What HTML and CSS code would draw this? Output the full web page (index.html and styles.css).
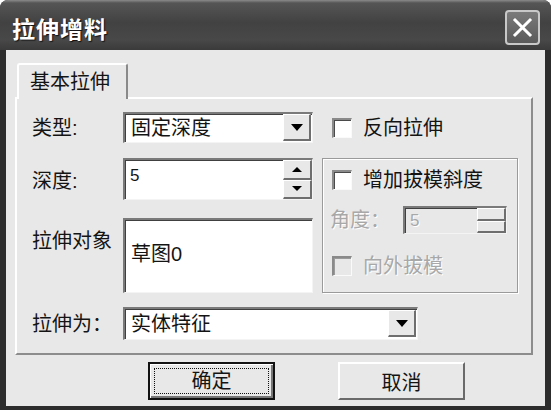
FILE: index.html
```html
<!DOCTYPE html>
<html lang="zh-CN">
<head>
  <meta charset="UTF-8">
  <title>拉伸增料</title>
  <link rel="stylesheet" href="styles.css">
</head>
<body>
  <div class="dialog">
    <div class="titlebar">
      <span class="title">拉伸增料</span>
      <span class="close">
        <svg width="21" height="21" viewBox="0 0 21 21"><path d="M3 3 L18 18 M18 3 L3 18" stroke="#fff" stroke-width="3" stroke-linecap="square"/></svg>
      </span>
    </div>

    <div class="client">
      <div class="tabs">
        <div class="tab">基本拉伸</div>
      </div>

      <div class="panel">
        <div class="form">
          <span class="lbl">类型:</span>
          <div class="combo">
            <span class="field-text">固定深度</span>
            <span class="drop"><i class="tri-down"></i></span>
          </div>
          <div class="check-row"><span class="check"></span>反向拉伸</div>

          <span class="lbl">深度:</span>
          <div class="spin">
            <span class="spin-text">5</span>
            <span class="spin-btns">
              <span class="spin-btn"><i class="tri-up small"></i></span>
              <span class="spin-btn"><i class="tri-down small"></i></span>
            </span>
          </div>

          <div class="group">
            <div class="check-row"><span class="check"></span>增加拔模斜度</div>
            <div class="angle-row disabled">
              <span>角度：</span>
              <div class="spin spin-off">
                <span class="spin-text">5</span>
                <span class="spin-btns">
                  <span class="spin-btn"></span>
                  <span class="spin-btn"></span>
                </span>
              </div>
            </div>
            <div class="check-row disabled"><span class="check check-off"></span>向外拔模</div>
          </div>

          <span class="lbl lbl-top">拉伸对象</span>
          <div class="listbox">草图0</div>

          <span class="lbl">拉伸为：</span>
          <div class="combo combo-wide">
            <span class="field-text">实体特征</span>
            <span class="drop"><i class="tri-down"></i></span>
          </div>
        </div>
      </div>

      <div class="buttons">
        <span class="btn btn-default"><span class="focus">确定</span></span>
        <span class="btn">取消</span>
      </div>
    </div>
  </div>
</body>
</html>
```

FILE: styles.css
```css
body {
  margin: 0;
  background: #fff;
  font-family: "Liberation Sans", "Noto Sans CJK SC", sans-serif;
  color: #141414;
}

.dialog {
  width: 551px;
  height: 410px;
  display: flex;
  flex-direction: column;
  background: #2c2c2c;
  border-radius: 8px 8px 0 0;
  overflow: hidden;
}

/* title bar */
.titlebar {
  height: 50px;
  box-sizing: border-box;
  padding: 5px 11px 0 12px;
  display: flex;
  align-items: center;
  justify-content: space-between;
  background: linear-gradient(#8a8a8a 0, #555 3px, #424242 45%, #484848 80%, #3a3a3a 100%);
}

.title {
  color: #fff;
  font-size: 23px;
  font-weight: bold;
  letter-spacing: 1px;
  text-shadow: 1px 1px 1px #111;
}

.close {
  width: 35px;
  height: 35px;
  box-sizing: border-box;
  border: 2px solid #c8c8c8;
  border-radius: 4px;
  background: linear-gradient(#7a7a7a, #5a5a5a);
  display: flex;
  align-items: center;
  justify-content: center;
}

/* client area */
.client {
  flex: 1;
  margin: 0 6px 4px 6px;
  padding: 13px 12px 0 9px;
  background: #e8e8e8;
}

.tabs {
  display: flex;
  padding-left: 2px;
}

.tab {
  position: relative;
  z-index: 1;
  width: 111px;
  height: 36px;
  box-sizing: border-box;
  margin-bottom: -2px;
  padding: 2px 0 0 11px;
  border-top: 2px solid #fff;
  border-left: 2px solid #fff;
  border-right: 2px solid #8a8a8a;
  border-radius: 3px 3px 0 0;
  background: #e8e8e8;
  font-size: 20px;
  line-height: 30px;
}

.panel {
  height: 258px;
  box-sizing: border-box;
  border-top: 2px solid #fff;
  border-left: 2px solid #fff;
  border-right: 2px solid #8c8c8c;
  border-bottom: 2px solid #8c8c8c;
  padding: 13px 0 0 15px;
}

.form {
  display: grid;
  grid-template-columns: 82px 190px 196px;
  grid-template-rows: 31px 45px 74px 33px;
  column-gap: 9px;
  row-gap: 15px;
  font-size: 20px;
}

.lbl {
  align-self: center;
  line-height: 24px;
}

.lbl-top {
  align-self: start;
  margin-top: 11px;
}

/* sunken fields */
.combo,
.spin,
.listbox {
  box-sizing: border-box;
  background: #fff;
  border-top: 2px solid #7a7a7a;
  border-left: 2px solid #7a7a7a;
  border-right: 1px solid #f4f4f4;
  border-bottom: 1px solid #f4f4f4;
  box-shadow: inset 1px 1px 0 #404040;
}

.combo {
  display: flex;
  align-items: center;
  justify-content: space-between;
  padding: 0 1px 1px 6px;
}

.combo-wide {
  grid-column: 2 / 4;
  width: 295px;
}

.field-text {
  font-size: 20px;
  line-height: 24px;
}

.drop {
  width: 28px;
  height: 27px;
  box-sizing: border-box;
  display: flex;
  align-items: center;
  justify-content: center;
  background: #e8e8e8;
  border-top: 1px solid #fff;
  border-left: 1px solid #fff;
  border-right: 2px solid #6e6e6e;
  border-bottom: 2px solid #6e6e6e;
}

.tri-down {
  width: 0;
  height: 0;
  border-left: 6px solid transparent;
  border-right: 6px solid transparent;
  border-top: 7px solid #000;
}

.tri-up {
  width: 0;
  height: 0;
  border-left: 6px solid transparent;
  border-right: 6px solid transparent;
  border-bottom: 7px solid #000;
}

.tri-down.small {
  border-left-width: 5px;
  border-right-width: 5px;
  border-top-width: 5px;
}

.tri-up.small {
  border-left-width: 5px;
  border-right-width: 5px;
  border-bottom-width: 5px;
}

.spin {
  height: 42px;
  display: flex;
  justify-content: space-between;
  padding-left: 5px;
}

.spin-text {
  font-size: 17px;
  line-height: 17px;
  padding-top: 7px;
}

.spin-btns {
  width: 29px;
  display: flex;
  flex-direction: column;
}

.spin-btn {
  flex: 1;
  display: flex;
  align-items: center;
  justify-content: center;
  background: #e8e8e8;
  border-top: 1px solid #fff;
  border-left: 1px solid #fff;
  border-right: 2px solid #6e6e6e;
  border-bottom: 2px solid #6e6e6e;
}

.listbox {
  height: 75px;
  padding: 22px 0 0 6px;
  font-size: 20px;
  line-height: 24px;
}

/* check boxes */
.check-row {
  display: flex;
  align-items: center;
  gap: 11px;
  padding-left: 10px;
  line-height: 24px;
}

.check {
  width: 20px;
  height: 20px;
  box-sizing: border-box;
  background: #fff;
  border-top: 2px solid #8a8a8a;
  border-left: 2px solid #8a8a8a;
  border-right: 1px solid #fafafa;
  border-bottom: 1px solid #fafafa;
  box-shadow: inset 1px 1px 0 #4a4a4a;
}

.check-off {
  background: #e8e8e8;
  box-shadow: inset 1px 1px 0 #9a9a9a;
}

/* group box */
.group {
  grid-column: 3;
  grid-row: 2 / span 2;
  height: 135px;
  box-sizing: border-box;
  border: 1px solid #9a9a9a;
  box-shadow: inset 1px 1px 0 #fff, 1px 1px 0 #fff;
  padding: 9px 10px 0 0;
  display: flex;
  flex-direction: column;
  gap: 14px;
}

.group .check-row {
  padding-left: 9px;
}

.disabled {
  color: #a8a8a8;
  text-shadow: 1px 1px 0 #fff;
}

.angle-row {
  display: flex;
  align-items: center;
  justify-content: space-between;
  padding-left: 7px;
  line-height: 24px;
}

.group .check-row.disabled {
  margin-top: 6px;
}

.spin-off {
  width: 104px;
  height: 28px;
  background: #e8e8e8;
}

.spin-off .spin-text {
  padding-top: 4px;
}

/* dialog buttons */
.buttons {
  display: flex;
  gap: 63px;
  margin-top: 7px;
  padding-left: 133px;
}

.btn {
  width: 127px;
  height: 38px;
  box-sizing: border-box;
  display: flex;
  align-items: center;
  justify-content: center;
  background: #e8e8e8;
  border-top: 2px solid #fff;
  border-left: 2px solid #fff;
  border-right: 2px solid #6a6a6a;
  border-bottom: 2px solid #6a6a6a;
  font-size: 20px;
}

.btn-default {
  border: 2px solid #111;
  box-shadow: inset 1px 1px 0 #fff, inset -2px -2px 0 #777;
  padding: 4px;
}

.focus {
  width: 100%;
  height: 100%;
  box-sizing: border-box;
  border: 1px dotted #111;
  display: flex;
  align-items: center;
  justify-content: center;
  line-height: 24px;
}
```
